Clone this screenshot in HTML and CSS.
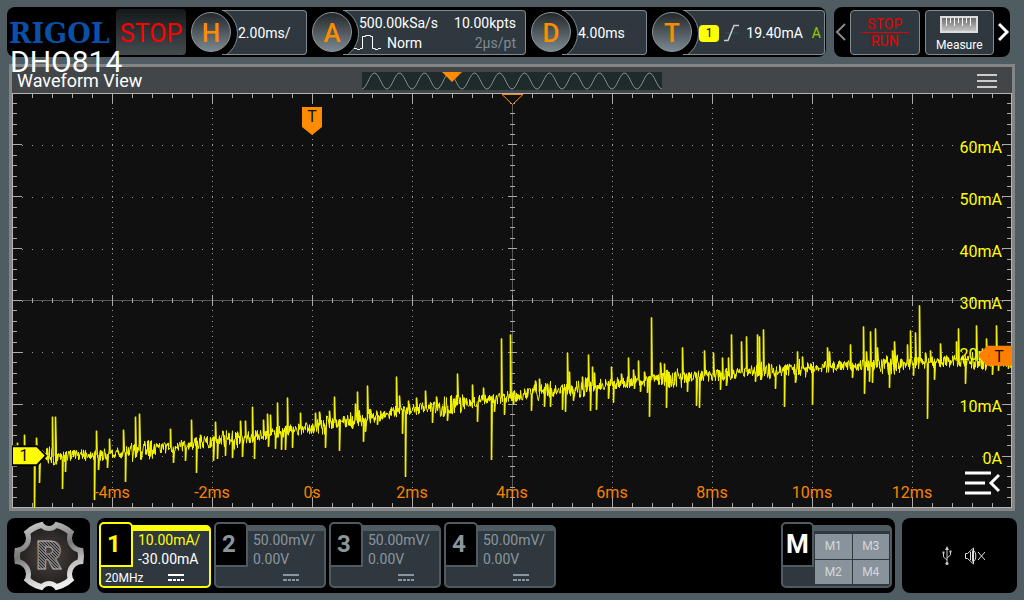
FILE: index.html
```
<!DOCTYPE html>
<html lang="en">
<head>
  <meta charset="utf-8">
  <title>RIGOL DHO814</title>
  <link rel="stylesheet" href="styles.css">
</head>
<body>
  <header class="top">
    <div class="bar status">
      <div class="brand">
        <span class="brand-name">RIGOL</span>
        <span class="model">DHO814</span>
      </div>
      <button class="run-state">STOP</button>
      <div class="group">
        <button class="knob">H</button>
        <div class="panel">2.00ms/</div>
      </div>
      <div class="group wide">
        <button class="knob">A</button>
        <div class="panel acquire">
          <div class="col">
            <span>500.00kSa/s</span>
            <span class="mode">
              <svg class="pulse" width="28" height="18" viewBox="0 0 28 18"><path d="M0 15.500h3M3 16.500h3M6 15.500h2.500V3.500h3v-1h5v1h2v12h3M21 16.500h3M24 15.500h3" fill="none" stroke="#fff"/></svg>
              Norm
            </span>
          </div>
          <div class="col right">
            <span>10.00kpts</span>
            <span class="dim">2µs/pt</span>
          </div>
        </div>
      </div>
      <div class="group">
        <button class="knob">D</button>
        <div class="panel">4.00ms</div>
      </div>
      <div class="group trigger">
        <button class="knob">T</button>
        <div class="panel">
          <span class="source">1</span>
          <svg width="16" height="18" viewBox="0 0 16 18"><path d="M1 9h14" stroke="#2c5a50"/><path d="M0 16.500h4L10 1.500h5" fill="none" stroke="#c8ccd0" stroke-width="1.500"/></svg>
          <span class="level">19.40mA</span>
          <span class="auto">A</span>
        </div>
      </div>
    </div>
    <nav class="bar tools">
      <button class="arrow" aria-label="Previous">
        <svg width="12" height="20" viewBox="0 0 12 20"><path d="M11 2L3 10l8 8" fill="none" stroke="#888" stroke-width="2"/></svg>
      </button>
      <button class="tool stop-run"><span>STOP</span><span>RUN</span></button>
      <button class="tool measure">
        <svg width="38" height="18" viewBox="0 0 38 18">
          <defs><linearGradient id="ruler" x2="0" y2="1"><stop offset="0" stop-color="#666"/><stop offset="1" stop-color="#ccc"/></linearGradient></defs>
          <path d="M1 1h36v15H1z" fill="url(#ruler)" stroke="#ddd" stroke-width="2"/>
          <path d="M6.500 2v8M10.500 2v5M14.500 2v8M18.500 2v5M22.500 2v8M26.500 2v5M30.500 2v8" stroke="#fff"/>
        </svg>
        <span>Measure</span>
      </button>
      <button class="arrow" aria-label="Next">
        <svg width="12" height="20" viewBox="0 0 12 20"><path d="M1 2l8 8-8 8" fill="none" stroke="#fff" stroke-width="3"/></svg>
      </button>
    </nav>
  </header>

  <main class="window">
    <div class="window-head">
      <h1>Waveform View</h1>
      <svg class="overview" id="overview" width="300" height="18" viewBox="0 0 300 18"></svg>
      <button class="menu" aria-label="Menu">
        <svg width="20" height="16" viewBox="0 0 20 16"><path d="M0 2h20M0 8h20M0 14h20" stroke="#ccc" stroke-width="2"/></svg>
      </button>
    </div>
    <div class="plot">
      <svg class="screen" id="screen"></svg>
      <button class="side-menu" aria-label="Open side menu">
        <svg width="36" height="26" viewBox="0 0 36 26"><path d="M1 3h26M1 13h20M1 23h26M35 5l-8 8 8 8" fill="none" stroke="#fff" stroke-width="3"/></svg>
      </button>
    </div>
  </main>

  <footer class="bottom">
    <button class="bar home" aria-label="Home">
      <svg width="72" height="72" viewBox="-36 -36 72 72">
        <defs>
          <linearGradient id="metal" x2="0.300" y2="1">
            <stop offset="0" stop-color="#e4e4e4"/><stop offset="0.250" stop-color="#aaa"/>
            <stop offset="0.500" stop-color="#777"/><stop offset="0.750" stop-color="#bbb"/><stop offset="1" stop-color="#eee"/>
          </linearGradient>
          <radialGradient id="core"><stop offset="0" stop-color="#4a4442"/><stop offset="1" stop-color="#1c1918"/></radialGradient>
          <linearGradient id="shine" x2="0" y2="1"><stop offset="0" stop-color="#ddd"/><stop offset="0.500" stop-color="#888"/><stop offset="1" stop-color="#ccc"/></linearGradient>
          <pattern id="grain" width="3" height="3" patternUnits="userSpaceOnUse">
            <rect width="3" height="3" fill="#777"/><path d="M0 0l3 3" stroke="#222"/>
          </pattern>
          <mask id="gear">
            <circle r="35" fill="#fff"/>
            <circle cy="-37" r="7"/><circle cy="37" r="7"/>
            <circle cx="33" cy="-18" r="10"/><circle cx="33" cy="18" r="10"/>
            <circle cx="-33" cy="-18" r="10"/><circle cx="-33" cy="18" r="10"/>
          </mask>
          <mask id="hole">
            <circle r="29" fill="#fff"/>
            <circle cy="-37" r="12"/><circle cy="37" r="12"/>
            <circle cx="33" cy="-18" r="15"/><circle cx="33" cy="18" r="15"/>
            <circle cx="-33" cy="-18" r="15"/><circle cx="-33" cy="18" r="15"/>
          </mask>
        </defs>
        <rect x="-36" y="-36" width="72" height="72" fill="url(#metal)" mask="url(#gear)"/>
        <rect x="-36" y="-36" width="72" height="72" fill="url(#core)" mask="url(#hole)"/>
        <text class="emblem" x="0" y="13" text-anchor="middle" fill="url(#grain)" stroke="url(#shine)">R</text>
      </svg>
    </button>

    <div class="bar channels">
      <button class="card active">
        <span class="tab">1</span>
        <span class="values"><span class="scale">10.00mA/</span><span>-30.00mA</span></span>
        <span class="foot"><span class="limit">20MHz</span><svg class="dc" width="16" height="8" viewBox="0 0 16 8"><path d="M0 1h16M0 6h4M5 6h3M9 6h3M13 6h3" stroke="currentColor" stroke-width="2"/></svg></span>
      </button>
      <button class="card">
        <span class="tab">2</span>
        <span class="values"><span>50.00mV/</span><span>0.00V</span></span>
        <span class="foot"><svg class="dc" width="16" height="8" viewBox="0 0 16 8"><path d="M0 1h16M0 6h4M5 6h3M9 6h3M13 6h3" stroke="currentColor" stroke-width="2"/></svg></span>
      </button>
      <button class="card">
        <span class="tab">3</span>
        <span class="values"><span>50.00mV/</span><span>0.00V</span></span>
        <span class="foot"><svg class="dc" width="16" height="8" viewBox="0 0 16 8"><path d="M0 1h16M0 6h4M5 6h3M9 6h3M13 6h3" stroke="currentColor" stroke-width="2"/></svg></span>
      </button>
      <button class="card">
        <span class="tab">4</span>
        <span class="values"><span>50.00mV/</span><span>0.00V</span></span>
        <span class="foot"><svg class="dc" width="16" height="8" viewBox="0 0 16 8"><path d="M0 1h16M0 6h4M5 6h3M9 6h3M13 6h3" stroke="currentColor" stroke-width="2"/></svg></span>
      </button>
      <button class="card math">
        <span class="tab">M</span>
        <span class="cells"><span>M1</span><span>M3</span><span>M2</span><span>M4</span></span>
      </button>
    </div>

    <div class="bar tray">
      <svg width="10" height="20" viewBox="0 0 10 20"><path d="M5 2v15M5 14L1.500 11V7M5 12l3.500-3V5" fill="none" stroke="#ccc"/><path d="M5 0L3 4h4zM.5 5.500h2v2h-2zM7.500 4.500h2v2h-2z" fill="#ccc"/><circle cx="5" cy="17.500" r="1.500" fill="#ccc"/></svg>
      <svg width="20" height="18" viewBox="0 0 20 18"><path d="M.5 6.500h2L8.500 1v16l-6-5.500h-2zM5.500 5v8M7.500 3.500v11M8.500 3.500c3 1 3 10 0 11M13 5l7 8M20 5l-7 8" fill="none" stroke="#ddd"/></svg>
    </div>
  </footer>

  <script src="scope.js"></script>
</body>
</html>
```
FILE: styles.css
```
* {
  box-sizing: border-box;
}
body {
  margin: 0;
  min-height: 100vh;
  padding: 7px;
  display: flex;
  flex-direction: column;
  gap: 7px;
  background: #4f5c61;
  color: #fff;
  font: 14px/20px Roboto, "Liberation Sans", sans-serif;
}
button {
  margin: 0;
  padding: 0;
  border: none;
  background: none;
  color: inherit;
  font: inherit;
  cursor: pointer;
}
svg {
  display: block;
  flex: none;
}
.bar {
  background: #000;
  border-radius: 8px;
}

/* top bar */
.top {
  display: flex;
  gap: 8px;
  height: 50px;
  padding-right: 7px;
}
.status {
  flex: 1;
  display: flex;
  align-items: center;
  gap: 5px;
  padding-right: 1px;
}
.brand {
  position: relative;
  width: 104px;
  padding: 4px 0 0 2px;
}
.brand-name {
  color: #0a50a8;
  font: bold 27px/48px "DejaVu Serif", serif;
}
.model {
  position: absolute;
  left: 3px;
  top: 40px;
  font-size: 30px;
  line-height: 32px;
  z-index: 2;
}
.run-state {
  width: 70px;
  height: 46px;
  padding-top: 3px;
  border-radius: 4px;
  background: linear-gradient(#14181b, #454c50);
  color: #f00;
  font-size: 25px;
}
.group {
  flex: 116;
  display: flex;
  align-items: center;
}
.group.wide {
  flex: 214;
}
.group.trigger {
  flex: 173;
}
.knob {
  flex: none;
  width: 40px;
  height: 40px;
  padding-top: 2px;
  margin-right: -9px;
  border: 1px solid #8a949c;
  border-radius: 50%;
  background: linear-gradient(#24282b, #7b8890);
  color: #ff8c00;
  font-size: 26px;
  font-weight: 500;
  z-index: 1;
}
.panel {
  position: relative;
  flex: 1;
  height: 45px;
  display: flex;
  align-items: center;
  padding: 2px 0 0 16px;
  overflow: hidden;
  border: 1px solid #7d8b94;
  border-left: none;
  border-radius: 0 4px 4px 0;
  background: #2f383f;
}
.panel::before {
  content: "";
  position: absolute;
  left: -37px;
  top: -4px;
  width: 51px;
  height: 51px;
  border: 1px solid #7d8b94;
  border-radius: 50%;
  background: #000;
}
.acquire {
  justify-content: space-between;
  padding-right: 9px;
}
.col {
  position: relative;
  display: flex;
  flex-direction: column;
}
.right {
  align-items: flex-end;
}
.mode {
  display: flex;
  gap: 5px;
  margin-left: -5px;
}
.dim {
  color: #7f8a93;
}
.trigger .panel {
  gap: 5px;
  padding-right: 3px;
}
.source {
  width: 20px;
  border-radius: 4px;
  background: #ff0;
  color: #000;
  font-size: 12px;
  line-height: 17px;
  text-align: center;
}
.level {
  margin-left: auto;
}
.auto {
  margin-left: 4px;
  color: #9c0;
}
.tools {
  display: flex;
  align-items: center;
  gap: 5px;
  width: 176px;
  padding: 0 1px;
  justify-content: space-between;
}
.tool {
  width: 70px;
  height: 45px;
  display: flex;
  flex-direction: column;
  align-items: center;
  justify-content: center;
  border: 1px solid #7d8b94;
  border-radius: 4px;
  background: #2f383f;
}
.arrow {
  width: 12px;
  margin: 0 -1px;
}
.stop-run {
  padding: 0 10px;
  align-items: stretch;
  color: #e80000;
  line-height: 16px;
}
.stop-run span:first-child {
  border-bottom: 1px solid #e00000;
}
.measure {
  padding-top: 4px;
  font-size: 12px;
  line-height: 14px;
  gap: 4px;
}

/* waveform window */
.window {
  flex: 1;
  display: flex;
  flex-direction: column;
  margin: 0 2px;
  border: 3px solid #858585;
}
.window-head {
  display: grid;
  grid-template-columns: 1fr auto 1fr;
  align-items: center;
  height: 26px;
  padding: 1px 15px 0 5px;
  background: #424648;
}
.window-head h1 {
  margin: 0;
  font-size: 18px;
  font-weight: 400;
}
.overview {
  background: #1f2a2b;
  margin-left: 10px;
}
.menu {
  justify-self: end;
}
.plot {
  position: relative;
  flex: 1;
  min-height: 240px;
  background: #101010;
}
.screen {
  position: absolute;
  inset: 0;
  width: 100%;
  height: 100%;
}
.side-menu {
  position: absolute;
  right: 12px;
  bottom: 12px;
}
.grat {
  stroke: #aaa;
  shape-rendering: crispEdges;
}
.frame {
  fill: none;
  stroke: #b4b4b4;
  shape-rendering: crispEdges;
}
.axis {
  stroke: #5a5a5a;
  shape-rendering: crispEdges;
}
.dots {
  fill: #999;
  shape-rendering: crispEdges;
}
.trace {
  fill: none;
  stroke: #f0f000;
  stroke-linejoin: bevel;
}
.glow {
  fill: none;
  stroke: #a8a500;
  stroke-width: 2;
}
.x-label,
.y-label {
  font-size: 16px;
}
.x-label {
  fill: #f88400;
  text-anchor: middle;
}
.y-label {
  fill: #ff0;
  text-anchor: end;
}
.mark-text {
  font-size: 16px;
  text-anchor: middle;
  fill: #111;
}

/* bottom bar */
.bottom {
  display: flex;
  gap: 7px;
  height: 75px;
}
.home {
  width: 83px;
  display: flex;
  align-items: center;
  justify-content: center;
}
.emblem {
  font: 900 38px Inter, sans-serif;
}
.channels {
  flex: 1;
  display: flex;
  align-items: flex-start;
  gap: 3px;
  padding: 7px 3px 0 2px;
}
.card {
  --line: #4f5b60;
  position: relative;
  width: 112px;
  height: 63px;
  display: flex;
  flex-direction: column;
  align-items: stretch;
  border: 2px solid var(--line);
  border-top-width: 6px;
  border-radius: 5px;
  background: #2f383f;
  color: #8b959d;
  text-align: left;
}
.card.active {
  --line: #ff0;
  color: #fff;
}
.tab {
  position: absolute;
  left: -2px;
  top: -9px;
  width: 34px;
  height: 45px;
  border: 2px solid var(--line);
  border-radius: 5px 5px 0 0;
  background: #000;
  color: #8b959d;
  font-size: 24px;
  font-weight: 700;
  line-height: 40px;
  padding-left: 6px;
}
.active .tab,
.active .scale {
  color: #ff0;
}
.values {
  display: flex;
  flex-direction: column;
  padding-left: 37px;
  line-height: 19px;
}
.foot {
  display: flex;
  align-items: center;
  height: 17px;
  padding: 0 25px 0 4px;
  font-size: 12px;
}
.dc {
  margin-left: auto;
}
.math {
  width: 111px;
  margin-left: auto;
  padding: 3px 1px 2px 32px;
}
.math .tab {
  width: 33px;
  padding-left: 3px;
  color: #fff;
  font-size: 26px;
}
.cells {
  flex: 1;
  display: grid;
  grid-template-columns: 1fr 1fr;
  gap: 1px;
  color: #d4d8dc;
  font-size: 12px;
  line-height: 24px;
  text-align: center;
}
.cells span {
  background: #89939b;
}
.tray {
  width: 115px;
  display: flex;
  align-items: center;
  justify-content: center;
  gap: 13px;
  padding-left: 7px;
}
```
FILE: scope.js
```
const NS = 'http://www.w3.org/2000/svg';
const screen_ = document.getElementById('screen');
const overview = document.getElementById('overview');

const ORIGIN_X = 12;
const ORIGIN_Y = 93;
const PLOT_W = 1000;
const PLOT_H = 414;

const baseline = [
  [12, 456], [60, 455], [100, 454], [140, 450], [170, 446], [200, 442],
  [240, 438], [280, 431], [312, 427], [340, 421], [362, 419], [400, 410],
  [440, 406], [460, 403], [490, 399], [510, 396], [540, 391], [570, 389],
  [600, 384], [640, 380], [670, 378], [712, 375], [750, 371], [790, 369],
  [830, 366], [870, 365], [912, 363], [960, 360], [1012, 361]
];

const spikes = [
  [17, 442], [24, 434], [34, 507], [36, 437], [39, 482], [52, 416], [55, 416],
  [62, 488], [65, 471], [94, 499], [96, 430], [98, 469], [107, 467], [109, 438],
  [123, 429], [125, 481], [135, 416], [139, 413], [170, 428], [173, 462],
  [185, 460], [191, 419], [196, 472], [200, 434], [213, 460], [215, 421],
  [217, 458], [225, 455], [232, 457], [240, 420], [242, 456], [245, 420],
  [252, 406], [254, 458], [263, 419], [267, 413], [268, 446], [270, 414],
  [275, 448], [277, 402], [281, 449], [285, 449], [287, 397], [292, 447],
  [300, 412], [315, 412], [319, 411], [325, 447], [329, 410], [334, 396],
  [339, 450], [355, 403], [357, 391], [363, 441], [365, 431], [367, 385],
  [377, 424], [396, 376], [399, 395], [402, 433], [405, 476], [408, 400],
  [416, 397], [425, 390], [432, 422], [436, 396], [443, 416], [447, 420],
  [457, 373], [472, 384], [477, 421], [483, 387], [491, 459], [494, 411],
  [501, 338], [504, 414], [510, 334], [513, 404], [531, 410], [535, 380],
  [539, 378], [544, 406], [547, 383], [550, 406], [562, 409], [565, 411],
  [567, 352], [569, 371], [573, 400], [582, 376], [588, 354], [590, 410],
  [592, 366], [594, 372], [596, 409], [608, 398], [611, 366], [613, 402],
  [621, 373], [628, 357], [633, 369], [634, 388], [638, 360], [640, 391],
  [644, 371], [647, 392], [649, 416], [651, 317], [660, 362], [664, 363],
  [666, 407], [682, 347], [687, 391], [696, 405], [699, 407], [704, 350],
  [713, 352], [720, 389], [722, 357], [726, 385], [728, 357], [731, 334],
  [741, 341], [746, 336], [755, 381], [757, 334], [759, 336], [763, 329],
  [775, 388], [784, 406], [795, 382], [797, 351], [802, 356], [812, 404],
  [827, 347], [829, 351], [850, 344], [852, 377], [863, 326], [864, 393],
  [866, 351], [869, 381], [870, 331], [872, 382], [875, 328], [877, 347],
  [889, 387], [892, 350], [894, 341], [907, 344], [910, 330], [913, 375],
  [915, 332], [919, 305], [925, 352], [927, 418], [930, 350], [934, 379],
  [940, 343], [956, 341], [958, 328], [965, 383], [976, 325], [982, 348],
  [986, 338], [992, 374], [996, 325], [998, 370], [1008, 368]
];

const xLabels = ['-4ms', '-2ms', '0s', '2ms', '4ms', '6ms', '8ms', '10ms', '12ms'];
const yLabels = ['60mA', '50mA', '40mA', '30mA', '20mA', '10mA', '0A'];

function add(parent, tag, attrs, text) {
  const el = document.createElementNS(NS, tag);
  for (const key in attrs) {
    el.setAttribute(key, attrs[key]);
  }
  if (text) {
    el.textContent = text;
  }
  parent.appendChild(el);
}

// same noise on every redraw
function makeNoise() {
  let seed = 814;
  return function () {
    seed = (seed * 16807) % 2147483647;
    return seed / 2147483647 - 0.5;
  };
}

function baseAt(x) {
  for (let i = 1; i < baseline.length; i++) {
    const [x0, y0] = baseline[i - 1];
    const [x1, y1] = baseline[i];
    if (x <= x1) {
      return y0 + (y1 - y0) * (x - x0) / (x1 - x0);
    }
  }
  return baseline[baseline.length - 1][1];
}

function tracePath(w, h) {
  const noise = makeNoise();
  const peaks = new Map(spikes);
  let d = '';
  for (let x = 12; x <= 1011; x++) {
    const burst = Math.sin(x / 17) + Math.sin(x / 7) > 0.7 ? 20 : 12;
    const px = (x + 0.5 - ORIGIN_X) * w / PLOT_W;
    // two samples per column keep the band solid
    const mid = baseAt(x) + noise() * burst;
    const y = peaks.has(x) ? peaks.get(x) : baseAt(x) + noise() * burst;
    [mid, y].forEach(v => {
      d += (d ? 'L' : 'M') + px.toFixed(1) + ' ' + ((v - ORIGIN_Y) * h / PLOT_H).toFixed(1);
    });
  }
  return d;
}

function spikePath(w, h) {
  let d = '';
  spikes.forEach(([x, y]) => {
    const px = (x + 0.5 - ORIGIN_X) * w / PLOT_W;
    d += `M${px} ${(baseAt(x) - ORIGIN_Y) * h / PLOT_H}V${(y - ORIGIN_Y) * h / PLOT_H}`;
  });
  return d;
}

function drawGraticule(w, h) {
  const dx = w / 10;
  const dy = h / 8;
  const cx = Math.floor(w / 2) + 0.5;
  const cy = Math.floor(h / 2) + 0.5;
  let ticks = '';
  let dots = '';

  for (let i = 1; i < 50; i++) {
    const x = Math.floor(i * dx / 5) + 0.5;
    const len = i % 5 ? 5 : 10;
    ticks += `M${x} 0v${len}M${x} ${h}v${-len}`;
    ticks += i % 5 ? `M${x} ${cy - 2.5}v5` : `M${x} ${cy - 5.5}v11`;
  }
  for (let i = 1; i < 40; i++) {
    const y = Math.floor(i * dy / 5) + 0.5;
    const len = i % 5 ? 5 : 10;
    ticks += `M0 ${y}h${len}M${w} ${y}h${-len}`;
    ticks += i % 5 ? `M${cx - 2.5} ${y}h5` : `M${cx - 4.5} ${y}h9`;
  }
  for (let col = 1; col < 10; col++) {
    for (let i = 1; i < 80; i++) {
      dots += `M${Math.floor(col * dx)} ${Math.floor(i * dy / 10)}h1v1h-1z`;
    }
  }
  for (let row = 1; row < 8; row++) {
    for (let i = 1; i < 100; i++) {
      dots += `M${Math.floor(i * dx / 10)} ${Math.round(row * dy)}h1v1h-1z`;
    }
  }

  add(screen_, 'path', { class: 'dots', d: dots });
  add(screen_, 'path', { class: 'axis', d: `M0 ${cy}H${w}M${cx} 0V${h}` });
  add(screen_, 'path', { class: 'grat', d: ticks });
  add(screen_, 'rect', { class: 'frame', x: 0.5, y: 0.5, width: w - 1, height: h - 1 });
}

function drawMarkers(w, h) {
  const zero = h * 7 / 8;
  const level = h * 262 / PLOT_H;
  const trig = w * 3 / 10;

  // channel ground
  add(screen_, 'path', { d: `M0 ${zero - 10}h25l9 9.500-9 9.500H0z`, fill: '#ff0', stroke: '#000', 'stroke-width': 2 });
  add(screen_, 'text', { class: 'mark-text', x: 12, y: zero + 5 }, '1');
  // trigger position
  add(screen_, 'path', { d: `M${trig - 10} 14h20v20l-10 8-10-8z`, fill: '#ff8c00' });
  add(screen_, 'text', { class: 'mark-text', x: trig, y: 29 }, 'T');
  // trigger level
  add(screen_, 'path', { d: `M${w} ${level - 10}h-25l-9 10 9 10h25z`, fill: '#ff8000' });
  add(screen_, 'text', { class: 'mark-text', x: w - 13, y: level + 6 }, 'T');
  // screen centre
  add(screen_, 'path', { d: `M${w / 2 - 10} 1.500h21l-10.500 10z`, fill: '#101010', stroke: '#ff8c00' });
}

function draw() {
  const w = screen_.clientWidth;
  const h = screen_.clientHeight;
  screen_.textContent = '';
  drawGraticule(w, h);
  add(screen_, 'path', { class: 'glow', d: spikePath(w, h) });
  add(screen_, 'path', { class: 'trace', d: tracePath(w, h) });
  xLabels.forEach((label, i) => {
    add(screen_, 'text', { class: 'x-label', x: w * (i + 1) / 10, y: h - 10 }, label);
  });
  yLabels.forEach((label, i) => {
    add(screen_, 'text', { class: 'y-label', x: w - 10, y: h * (i + 1) / 8 + 8 }, label);
  });
  drawMarkers(w, h);
}

function drawOverview() {
  let d = 'M0 17';
  for (let x = 1; x <= 300; x++) {
    d += `L${x} ${(9 + 8 * Math.cos(x * Math.PI * 2 / 25)).toFixed(1)}`;
  }
  add(overview, 'path', { d: d, fill: 'none', stroke: '#8a9090' });
  add(overview, 'path', { d: 'M80 0h20l-10 10z', fill: '#ff8c00' });
}

drawOverview();
draw();
window.addEventListener('resize', draw);
```
